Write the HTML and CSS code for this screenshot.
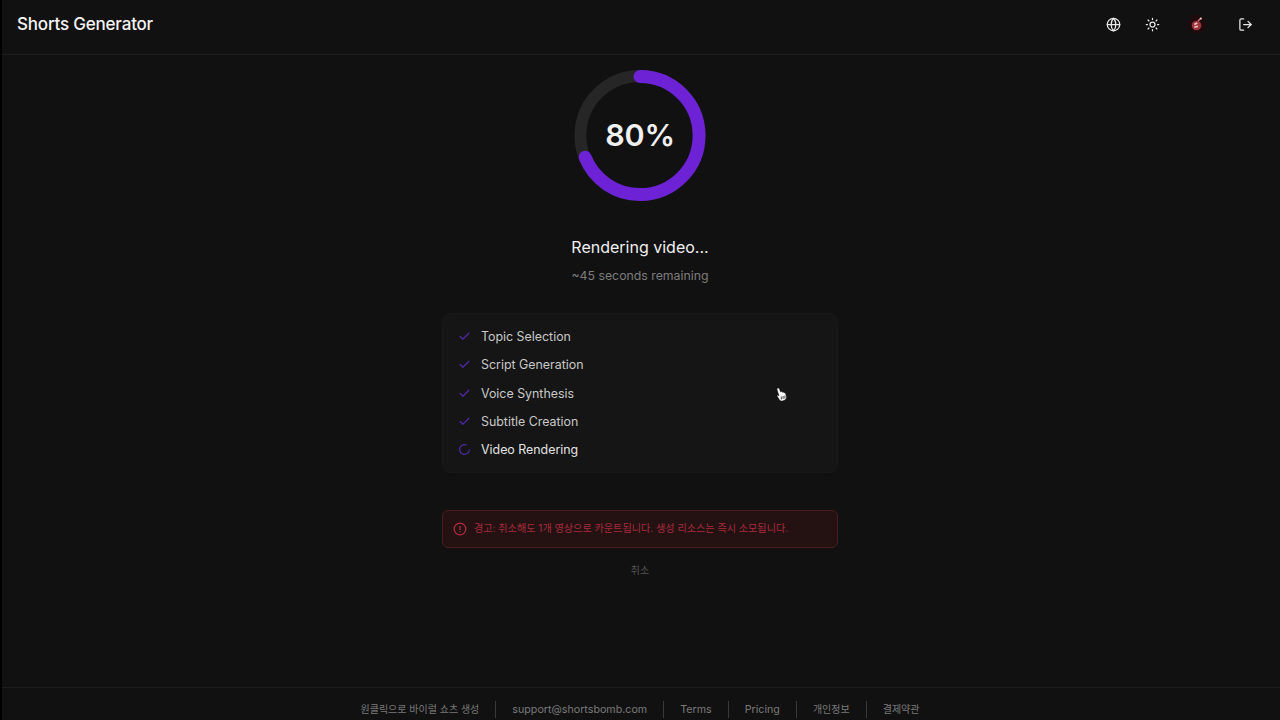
FILE: index.html
```html
<!DOCTYPE html>
<html lang="ko">
<head>
<meta charset="utf-8">
<title>Shorts Generator</title>
<link rel="stylesheet" href="styles.css">
</head>
<body>
<div class="app">
  <header class="topbar">
    <div class="brand">Shorts Generator</div>
    <nav class="tools">
      <svg class="tool" viewBox="0 0 24 24"><circle cx="12" cy="12" r="10"/><path d="M2 12h20"/><path d="M12 2a15 15 0 0 1 0 20a15 15 0 0 1 0-20z"/></svg>
      <svg class="tool" viewBox="0 0 24 24"><circle cx="12" cy="12" r="4"/><path d="M12 2v2M12 20v2M4.900 4.900l1.400 1.400M17.700 17.700l1.400 1.400M2 12h2M20 12h2M6.300 17.700l-1.400 1.400M19.100 4.900l-1.400 1.400"/></svg>
      <svg class="avatar" viewBox="0 0 20 20"><circle cx="10" cy="10" r="9.500" fill="#1e0b0d"/><circle cx="9.500" cy="11.500" r="4.800" fill="#9c343c"/><path d="M7.300 10.500l3-1.500M7.300 13.200l3.700-1" stroke="#f3c9c4" stroke-width="1.500" fill="none"/><path d="M11 7l2-2" stroke="#d87a7a" stroke-width="1.300" fill="none"/><circle cx="13.800" cy="4.600" r="1.100" fill="#f5d5cc"/></svg>
      <svg class="tool" viewBox="0 0 24 24"><path d="M9 21H5a2 2 0 0 1-2-2V5a2 2 0 0 1 2-2h4"/><path d="M16 17l5-5-5-5"/><path d="M21 12H9"/></svg>
    </nav>
  </header>

  <main class="content">
    <div class="ring">
      <svg viewBox="0 0 132 132" class="ring-svg">
        <circle class="ring-track" cx="66" cy="66" r="60"/>
        <circle class="ring-bar" cx="66" cy="66" r="59.500" pathLength="100" stroke-dasharray="69 100" transform="rotate(-90 66 66)"/>
      </svg>
      <span class="ring-label">80%</span>
    </div>
    <h1 class="status">Rendering video...</h1>
    <p class="remaining">~45 seconds remaining</p>

    <ul class="steps">
      <li class="step"><svg class="check" viewBox="0 0 24 24"><path d="M20 6L9 17l-5-5"/></svg>Topic Selection</li>
      <li class="step"><svg class="check" viewBox="0 0 24 24"><path d="M20 6L9 17l-5-5"/></svg>Script Generation</li>
      <li class="step"><svg class="check" viewBox="0 0 24 24"><path d="M20 6L9 17l-5-5"/></svg>Voice Synthesis</li>
      <li class="step"><svg class="check" viewBox="0 0 24 24"><path d="M20 6L9 17l-5-5"/></svg>Subtitle Creation</li>
      <li class="step active"><svg class="check" viewBox="0 0 24 24"><path d="M21 12a9 9 0 1 1-6.200-8.600"/></svg>Video Rendering</li>
    </ul>

    <div class="warning">
      <svg class="warn-icon" viewBox="0 0 24 24"><circle cx="12" cy="12" r="10"/><path d="M12 7.500v5.500M12 16.500v.01"/></svg>
      <span>경고: 취소해도 1개 영상으로 카운트됩니다. 생성 리소스는 즉시 소모됩니다.</span>
    </div>
    <div class="cancel">취소</div>
  </main>

  <footer class="footer">
    <span class="foot-item ko">원클릭으로 바이럴 쇼츠 생성</span>
    <span class="foot-item">support@shortsbomb.com</span>
    <span class="foot-item">Terms</span>
    <span class="foot-item">Pricing</span>
    <span class="foot-item ko">개인정보</span>
    <span class="foot-item ko">결제약관</span>
  </footer>

  <svg class="pointer" viewBox="0 0 14 16"><path d="M2.500 1.200c.7-.5 1.600-.2 1.900.6l1.200 3.200.6-.4c.5-.2 1 0 1.200.4l.2.300c.4-.4 1.100-.2 1.300.3l.1.300c.6-.3 1.300 0 1.500.6l.9 3.100c.3 1.400-.3 2.800-1.500 3.400l-2.500.9c-1.200.3-2.300-.2-3-1.200L2.500 9.700c-.4-.6-.8-2 .3-1.500l1.200.7L2 2.500c-.1-.5.100-1 .5-1.300z" fill="#fff" stroke="#111" stroke-width=".5"/><path d="M6.300 9.500v3M8.100 9v3M9.900 8.600v3" stroke="#333" stroke-width=".9"/></svg>
</div>
</body>
</html>
```
FILE: styles.css
```css
* { box-sizing: border-box; }
html, body { margin: 0; height: 100%; background: #000; }
body { font-family: Inter, "Noto Sans CJK KR", sans-serif; overflow: hidden; }
.app {
  position: relative;
  height: 720px;
  margin: 0 0 0 2px;
  background: #111111;
  display: flex;
  flex-direction: column;
}
.topbar {
  height: 55px;
  flex: none;
  border-bottom: 1px solid #1d1d1d;
  display: flex;
  align-items: center;
  justify-content: space-between;
  padding: 0 27px 5px 15px;
}
.brand { font-size: 17px; font-weight: 500; color: #f4f4f4; letter-spacing: -0.2px; padding-bottom: 2px; }
.tools { display: flex; align-items: center; gap: 24px; }
.tool {
  width: 15px; height: 15px;
  fill: none; stroke: #e8e8e8; stroke-width: 2; stroke-linecap: round; stroke-linejoin: round;
}
.avatar { width: 20px; height: 20px; margin: -1px 7.500px 0 2.500px; }
.content { flex: 1; display: flex; flex-direction: column; align-items: center; min-height: 0; }
.ring { position: relative; width: 132px; height: 131px; margin-top: 15px; margin-right: 2px; flex: none; }
.ring-svg { display: block; width: 132px; height: 131px; }
.ring-track { fill: none; stroke: #262626; stroke-width: 12; }
.ring-bar { fill: none; stroke: #6d22d6; stroke-width: 13; stroke-linecap: round; }
.ring-label {
  position: absolute; inset: 0 0 2px 0;
  display: flex; align-items: center; justify-content: center;
  font-size: 30.500px; font-weight: 600; color: #f0f0f0; letter-spacing: -0.2px;
}
.status { margin: 36px 2px 0 0; font-size: 16px; line-height: 20px; font-weight: 400; color: #f0f0f0; }
.remaining { margin: 9px 2px 0 0; font-size: 12.300px; line-height: 20px; color: #7d7d7d; }
.steps {
  list-style: none;
  margin: 27px 2px 0 0;
  padding: 8.500px 15px;
  width: 396px;
  height: 160px;
  background: #151515;
  border: 1px solid #191919;
  border-radius: 9px;
  display: flex;
  flex-direction: column;
}
.step {
  height: 28.300px;
  flex: none;
  display: flex;
  align-items: center;
  gap: 10px;
  font-size: 12.400px;
  color: #c9c9c9;
}
.step.active { color: #e4e4e4; }
.check {
  width: 13px; height: 13px; flex: none;
  fill: none; stroke: #4f2ba8; stroke-width: 2.200; stroke-linecap: round; stroke-linejoin: round;
}
.warning {
  margin: 37px 2px 0 0;
  width: 396px;
  height: 38px;
  flex: none;
  display: flex;
  align-items: center;
  gap: 7px;
  padding: 0 10px;
  background: #241213;
  border: 1px solid #4a1a1f;
  border-radius: 6px;
  font-size: 10.100px;
  color: #aa2a3e;
}
.warning span { position: relative; top: -2px; }
.warn-icon {
  width: 14px; height: 14px; flex: none;
  fill: none; stroke: #b52a42; stroke-width: 2.200; stroke-linecap: round;
}
.cancel { margin: 15px 2px 0 0; font-size: 10px; line-height: 14px; color: #555555; }
.footer {
  height: 33px;
  flex: none;
  border-top: 1px solid #1d1d1d;
  display: flex;
  align-items: center;
  justify-content: center;
  padding: 11px 2px 0 0;
  font-size: 10.700px;
  color: #7a7a7a;
}
.foot-item { padding: 0 16px; line-height: 17px; }
.foot-item.ko { font-size: 10px; }
.foot-item + .foot-item { border-left: 1px solid #3a3a3a; }
.pointer { position: absolute; left: 773px; top: 387px; width: 14px; height: 16px; }
```
